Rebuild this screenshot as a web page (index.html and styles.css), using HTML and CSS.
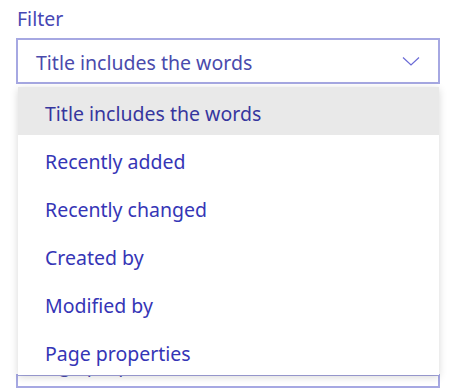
FILE: index.html
```html
<!DOCTYPE html>
<html>
<head>
    <meta charset="UTF-8">
    <meta name="viewport" content="width=device-width, initial-scale=1.0">
    <title>Filter</title>
    <link rel="stylesheet" href="styles.css">
</head>
<body>
    <div class="panel">
        <div class="field-label">Filter</div>

        <div class="select-wrap">
            <div class="select">
                <span class="select-value">Title includes the words</span>
                <svg class="chevron" width="18" height="10" viewBox="0 0 18 10">
                    <path d="M1 1.5 L9 9 L17 1.5" fill="none" stroke="#6b6bd6" stroke-width="1.2"/>
                </svg>
            </div>

            <ul class="menu">
                <li class="menu-item active">Title includes the words</li>
                <li class="menu-item">Recently added</li>
                <li class="menu-item">Recently changed</li>
                <li class="menu-item">Created by</li>
                <li class="menu-item">Modified by</li>
                <li class="menu-item">Page properties</li>
            </ul>
        </div>

        <!-- next field, mostly hidden under the open menu -->
        <div class="select-lower">
            <span class="lower-value">Page properties</span>
        </div>
    </div>
</body>
</html>
```

FILE: styles.css
```css
:root {
    --ink: #3535b6;
    --border: #a6a8e2;
}

body {
    margin: 0;
    background: #ffffff;
    font-family: "Noto Sans", "Open Sans", sans-serif;
    overflow: hidden;
}

.panel {
    padding: 5px 10px 0 16px;
}

.field-label {
    font-size: 19.5px;
    line-height: 28px;
    color: #4747b4;
    margin-bottom: 5px;
    padding-left: 1px;
}

.select-wrap {
    position: relative;
}

.select {
    display: flex;
    align-items: center;
    justify-content: space-between;
    height: 42px;
    border: 2px solid var(--border);
    padding: 0 18px 0 18px;
    font-size: 19.5px;
    color: #4a4aac;
}

.select-value {
    padding-top: 3px;
}

.chevron {
    display: block;
}

.menu {
    position: absolute;
    top: calc(100% + 3px);
    left: 2px;
    right: 1px;
    margin: 0;
    padding: 0;
    list-style: none;
    background: #ffffff;
    box-shadow: 0 2px 8px rgba(0,0,0,0.16);
    z-index: 2;
}

.menu-item {
    box-sizing: border-box;
    height: 48px;
    display: flex;
    align-items: center;
    padding: 4px 0 0 27px;
    font-size: 19.5px;
    color: var(--ink);
}

.menu-item.active {
    background: #e9e9e9;
    color: #36369e;
}

.select-lower {
    margin-top: 290px;
    height: 10px;
    border: 2px solid var(--border);
    overflow: hidden;
    padding-left: 18px;
}

.lower-value {
    display: block;
    margin-top: -24px;
    line-height: 26px;
    font-size: 19.5px;
    color: #4a4aac;
}
```
